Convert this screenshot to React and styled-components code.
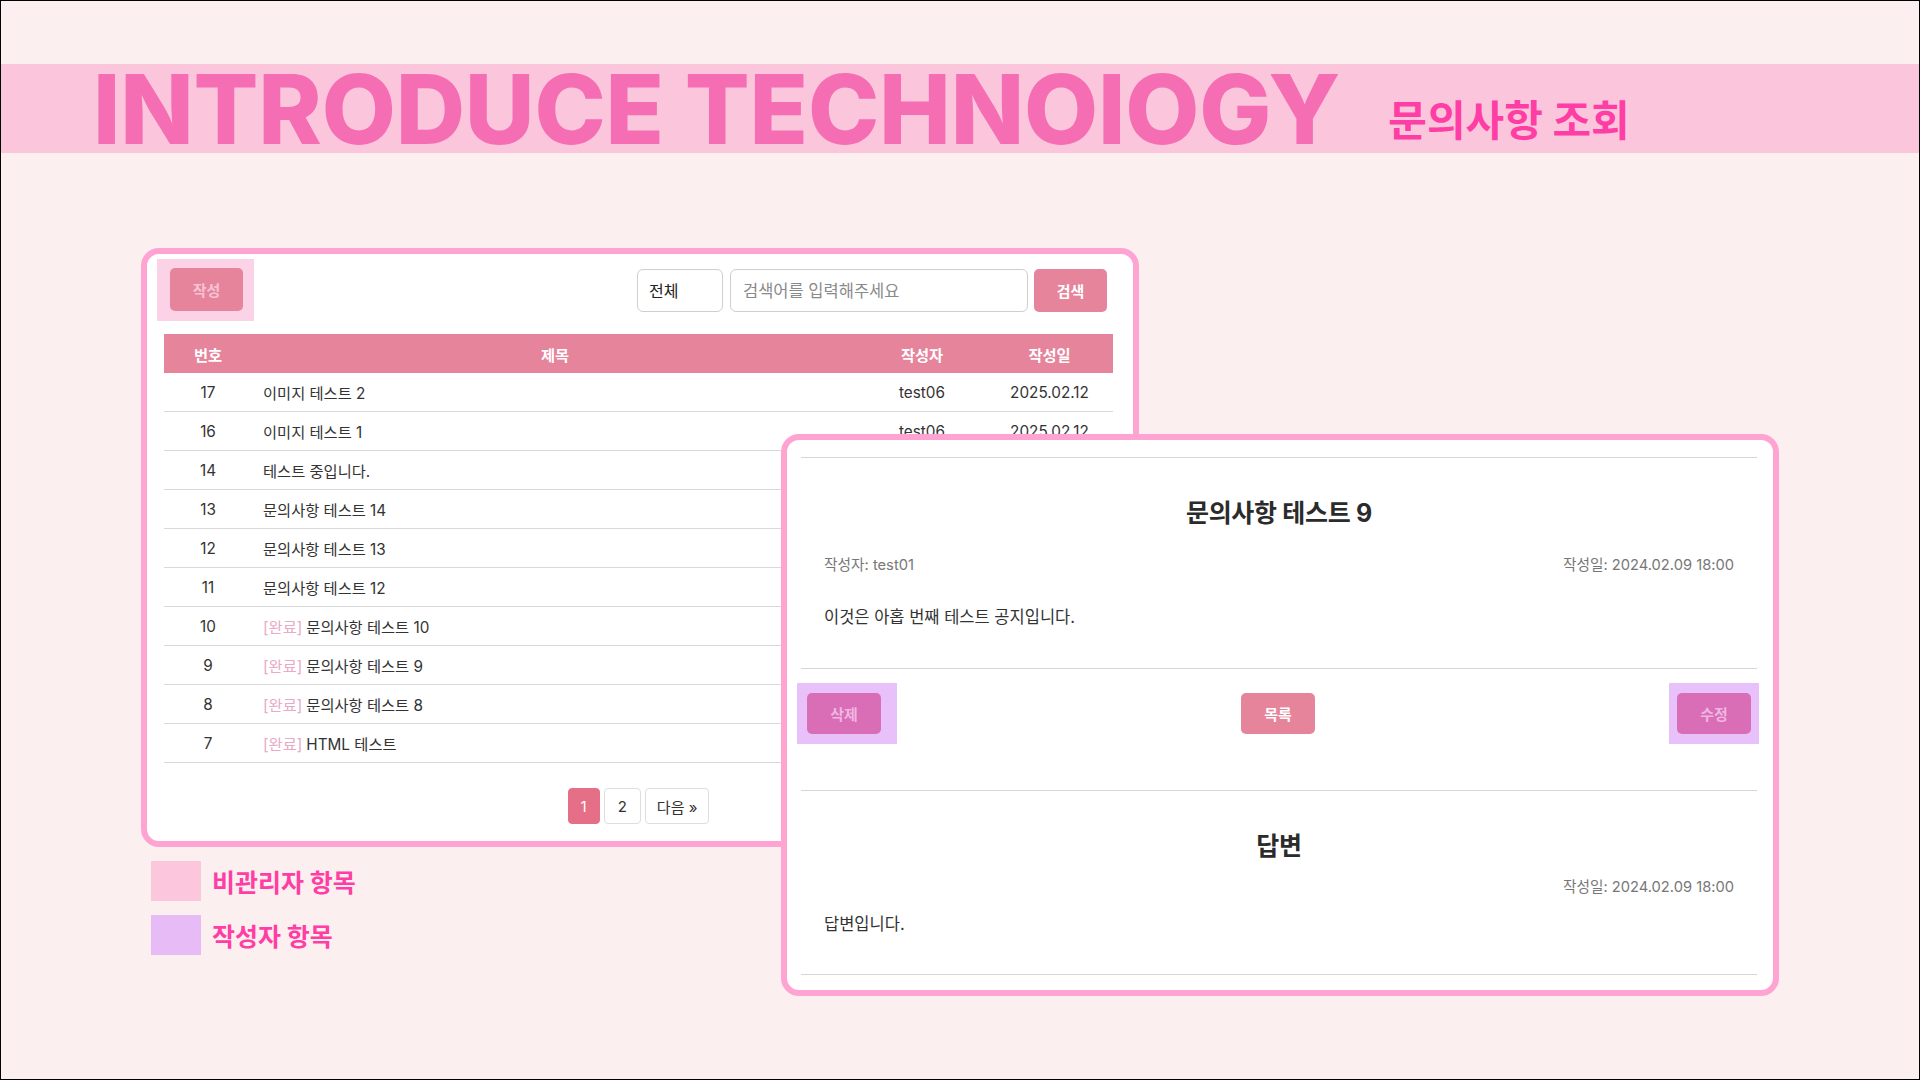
import React from "react";
import styled, { createGlobalStyle } from "styled-components";

const PINK_BORDER = "#ffa4d2";
const BTN_PINK = "#e6849c";
const BTN_PURPLE = "#d96db6";
const HL_PINK = "#fcd2e6";
const HL_PURPLE = "#e8c1fb";
const HOT_PINK = "#ff3ea5";

const GlobalStyle = createGlobalStyle`
  body {
    margin: 0;
    background: #fcefef;
    font-family: Inter, "Noto Sans CJK KR", sans-serif;
  }
`;

const Page = styled.div`
  width: 1920px;
  height: 1080px;
  box-sizing: border-box;
  border: 1px solid #000;
  background: #fcefef;
  overflow: hidden;
  padding-top: 63px;
`;

const Band = styled.header`
  height: 89px;
  background: #fbc6dc;
  display: flex;
  align-items: center;
  padding-left: 92px;
`;

const BigTitle = styled.h1`
  margin: 0;
  font-family: Inter, sans-serif;
  font-weight: 800;
  font-size: 96px;
  line-height: 1;
  letter-spacing: -0.2px;
  color: #f56eb4;
`;

const SubTitle = styled.h2`
  margin: 18px 0 0 48px;
  font-family: "Noto Sans CJK KR", sans-serif;
  font-weight: 700;
  font-size: 42px;
  letter-spacing: 0;
  color: ${HOT_PINK};
`;

const Stage = styled.section`
  display: grid;
  grid-template-columns: 640px 358px 640px;
  grid-template-rows: 186px 413px 149px;
  margin: 95px 0 0 140px;
`;

const Card = styled.div`
  box-sizing: border-box;
  background: #fff;
  border: 6px solid ${PINK_BORDER};
  border-radius: 18px;
  display: flex;
  flex-direction: column;
`;

const ListCard = styled(Card)`
  grid-column: 1 / 3;
  grid-row: 1 / 3;
  padding: 5px 20px 17px 17px;
`;

const DetailCard = styled(Card)`
  grid-column: 2 / 4;
  grid-row: 2 / 4;
  z-index: 1;
  padding: 17px 16px 16px 14px;
`;

const Toolbar = styled.div`
  display: flex;
  align-items: center;
  justify-content: space-between;
  margin-right: 6px;
  margin-bottom: 13px;
`;

const Highlight = styled.div`
  display: flex;
  padding: ${(p) => p.$pad || "9px 11px 10px 13px"};
  margin-left: ${(p) => p.$ml || "0"};
  justify-self: ${(p) => p.$self || "auto"};
  background: ${(p) => (p.$purple ? HL_PURPLE : HL_PINK)};
`;

const Button = styled.button`
  box-sizing: border-box;
  width: ${(p) => p.$w || "73px"};
  height: ${(p) => p.$h || "42px"};
  border: none;
  border-radius: 5px;
  background: ${(p) => (p.$purple ? BTN_PURPLE : BTN_PINK)};
  color: ${(p) => (p.$faded ? (p.$purple ? "#f0b6e2" : "#f8c2d4") : "#fff")};
  font-family: Inter, "Noto Sans CJK KR", sans-serif;
  font-size: 15px;
  font-weight: 600;
  padding: 0;
`;

const SearchGroup = styled.div`
  display: flex;
  align-items: center;
`;

const Select = styled.div`
  box-sizing: border-box;
  width: 86px;
  height: 43px;
  border: 1px solid #cfcfcf;
  border-radius: 6px;
  display: flex;
  align-items: center;
  padding-left: 11px;
  font-size: 16px;
  color: #222;
  margin-right: 7px;
`;

const SearchInput = styled.div`
  box-sizing: border-box;
  width: 298px;
  height: 43px;
  border: 1px solid #cfcfcf;
  border-radius: 6px;
  display: flex;
  align-items: center;
  padding-left: 12px;
  font-size: 16.5px;
  color: #8a8a8a;
  margin-right: 6px;
`;

const Row = styled.div`
  box-sizing: border-box;
  display: grid;
  grid-template-columns: 88px 606px 128px 1fr;
  align-items: center;
  height: 39px;
  font-size: 15.3px;
  color: ${(p) => (p.$head ? "#fff" : "#333")};
  font-weight: ${(p) => (p.$head ? 700 : 400)};
  background: ${(p) => (p.$head ? "#e5849b" : "transparent")};
  border-bottom: ${(p) => (p.$head ? "none" : "1px solid #d9d9d9")};
`;

const Cell = styled.div`
  text-align: ${(p) => p.$align || "center"};
  padding-left: ${(p) => (p.$align === "left" ? "11px" : "0")};
  white-space: nowrap;
`;

const Done = styled.span`
  color: #eaa9c6;
  margin-right: 4px;
`;

const Pager = styled.div`
  display: flex;
  justify-content: center;
  gap: 4px;
  margin-top: 25px;
`;

const PageBtn = styled.div`
  box-sizing: border-box;
  height: 36px;
  padding: 0 ${(p) => p.$px || "12px"};
  display: flex;
  align-items: center;
  justify-content: center;
  border: 1px solid ${(p) => (p.$active ? "#e46f87" : "#dedede")};
  border-radius: 4px;
  background: ${(p) => (p.$active ? "#e46f87" : "#fff")};
  color: ${(p) => (p.$active ? "#fff" : "#333")};
  font-size: 15px;
`;

const Rule = styled.hr`
  width: 100%;
  margin: 0;
  border: none;
  border-top: 1px solid #d6d6d6;
`;

const Section = styled.div`
  display: flex;
  flex-direction: column;
  padding: 0 23px;
`;

const DetailTitle = styled.h3`
  margin: ${(p) => p.$m || "0"};
  text-align: center;
  font-size: 25px;
  line-height: 34px;
  font-weight: 700;
  color: #2b2b2b;
  letter-spacing: -0.3px;
`;

const Meta = styled.div`
  display: flex;
  justify-content: ${(p) => p.$justify || "space-between"};
  font-size: 14.7px;
  line-height: 20px;
  color: #777;
  margin: ${(p) => p.$m || "0"};
`;

const Body = styled.p`
  margin: ${(p) => p.$m || "0"};
  font-size: 16.5px;
  line-height: 22px;
  color: #333;
`;

const Actions = styled.div`
  display: grid;
  grid-template-columns: 1fr auto 1fr;
  align-items: center;
  margin: 14px -2px 46px -4px;
`;

const Legend = styled.div`
  grid-column: 1;
  grid-row: 3;
  display: flex;
  flex-direction: column;
  gap: 14px;
  padding: 14px 0 0 10px;
`;

const LegendItem = styled.div`
  display: flex;
  align-items: center;
  gap: 11px;
`;

const Swatch = styled.div`
  width: 50px;
  height: 40px;
  background: ${(p) => (p.$purple ? "#e7bcf6" : "#fcc7dd")};
`;

const LegendText = styled.span`
  font-family: "Noto Sans CJK KR", sans-serif;
  font-weight: 700;
  font-size: 25px;
  line-height: 34px;
  color: ${HOT_PINK};
`;

const rows = [
  { no: 17, title: "이미지 테스트 2", author: "test06", date: "2025.02.12" },
  { no: 16, title: "이미지 테스트 1", author: "test06", date: "2025.02.12" },
  { no: 14, title: "테스트 중입니다.", author: "test05", date: "2025.02.11" },
  { no: 13, title: "문의사항 테스트 14", author: "test02", date: "2024.02.10" },
  { no: 12, title: "문의사항 테스트 13", author: "test02", date: "2024.02.10" },
  { no: 11, title: "문의사항 테스트 12", author: "test02", date: "2024.02.10" },
  { no: 10, title: "문의사항 테스트 10", author: "test01", date: "2024.02.09", done: true },
  { no: 9, title: "문의사항 테스트 9", author: "test01", date: "2024.02.09", done: true },
  { no: 8, title: "문의사항 테스트 8", author: "test01", date: "2024.02.09", done: true },
  { no: 7, title: "HTML 테스트", author: "test01", date: "2024.02.09", done: true },
];

export default function App() {
  return (
    <>
      <GlobalStyle />
      <Page>
        <Band>
          <BigTitle>INTRODUCE TECHNOIOGY</BigTitle>
          <SubTitle>문의사항 조회</SubTitle>
        </Band>

        <Stage>
          <ListCard>
            <Toolbar>
              <Highlight $ml="-7px">
                <Button $faded $h="43px">작성</Button>
              </Highlight>
              <SearchGroup>
                <Select>전체</Select>
                <SearchInput>검색어를 입력해주세요</SearchInput>
                <Button $h="43px">검색</Button>
              </SearchGroup>
            </Toolbar>

            <Row $head>
              <Cell>번호</Cell>
              <Cell>제목</Cell>
              <Cell>작성자</Cell>
              <Cell>작성일</Cell>
            </Row>
            {rows.map((r) => (
              <Row key={r.no}>
                <Cell>{r.no}</Cell>
                <Cell $align="left">
                  {r.done && <Done>[완료]</Done>}
                  {r.title}
                </Cell>
                <Cell>{r.author}</Cell>
                <Cell>{r.date}</Cell>
              </Row>
            ))}

            <Pager>
              <PageBtn $active $px="12px">1</PageBtn>
              <PageBtn $px="13px">2</PageBtn>
              <PageBtn $px="11px">다음 »</PageBtn>
            </Pager>
          </ListCard>

          <DetailCard>
            <Rule />
            <Section>
              <DetailTitle $m="38px 0 0">문의사항 테스트 9</DetailTitle>
              <Meta $m="25px 0 0">
                <span>작성자: test01</span>
                <span>작성일: 2024.02.09 18:00</span>
              </Meta>
              <Body $m="31px 0 40px">이것은 아홉 번째 테스트 공지입니다.</Body>
            </Section>
            <Rule />
            <Actions>
              <Highlight $purple $self="start" $pad="10px 16px 10px 10px">
                <Button $purple $faded $w="74px" $h="41px">삭제</Button>
              </Highlight>
              <Button $w="74px" $h="41px">목록</Button>
              <Highlight $purple $self="end" $pad="10px 8px 10px 8px">
                <Button $purple $faded $w="74px" $h="41px">수정</Button>
              </Highlight>
            </Actions>
            <Rule />
            <Section>
              <DetailTitle $m="38px 0 0">답변</DetailTitle>
              <Meta $justify="flex-end" $m="14px 0 0">
                <span>작성일: 2024.02.09 18:00</span>
              </Meta>
              <Body $m="16px 0 39px">답변입니다.</Body>
            </Section>
            <Rule />
          </DetailCard>

          <Legend>
            <LegendItem>
              <Swatch />
              <LegendText>비관리자 항목</LegendText>
            </LegendItem>
            <LegendItem>
              <Swatch $purple />
              <LegendText>작성자 항목</LegendText>
            </LegendItem>
          </Legend>
        </Stage>
      </Page>
    </>
  );
}
